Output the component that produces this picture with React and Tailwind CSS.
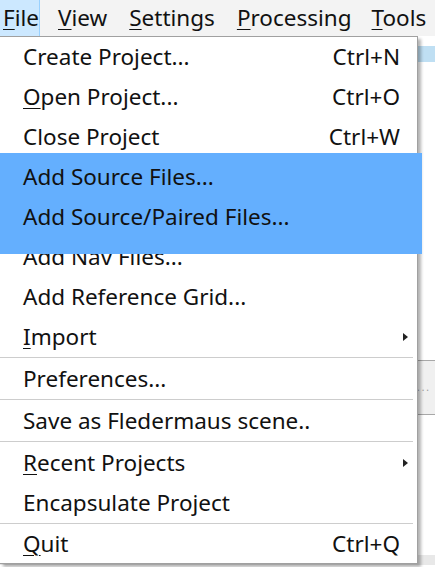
import React from "react";

const K = ({ children }) => (
  <span className="underline underline-offset-[3px] decoration-1">{children}</span>
);

function MenuBar() {
  return (
    <div className="flex h-[36px] bg-[#f3f3f3] items-center text-[22.5px]">
      <div className="h-[36px] w-[40px] pl-[3px] flex items-center bg-[#cce8ff] border-r border-[#99d1ff]">
        <span><K>F</K>ile</span>
      </div>
      <div className="pl-[18px] pr-[11px]"><K>V</K>iew</div>
      <div className="px-[11px]"><K>S</K>ettings</div>
      <div className="px-[11px]"><K>P</K>rocessing</div>
      <div className="px-[9px]"><K>T</K>ools</div>
    </div>
  );
}

function Background() {
  return (
    <div className="flex flex-col">
      <div className="h-[10px] bg-white" />
      <div className="h-[16px] bg-[#bfdff3]" />
      <div className="h-[298px] bg-white" />
      <div className="h-[55px] bg-[#f0f0f0] border-y border-[#a8a8a8] flex items-center justify-end pr-[4px]">
        <span className="text-[10px] tracking-[2px] text-[#9a9a9a]">....</span>
      </div>
      <div className="h-[140px] bg-white" />
      <div className="h-[10px] bg-[#e8e8e8]" />
    </div>
  );
}

function Arrow() {
  return (
    <svg width="5" height="8" viewBox="0 0 5 8">
      <path d="M0 0 L5 4 L0 8 Z" fill="#222" />
    </svg>
  );
}

function Item({ label, shortcut, arrow, raised, last }) {
  return (
    <div
      className={
        "flex items-center pl-[23px] pr-[7px] " +
        (last ? "h-[38px] " : "h-10 ") +
        (raised ? "relative z-20" : "")
      }
    >
      <span className="flex-1 whitespace-nowrap">{label}</span>
      <span className="whitespace-nowrap text-right">{shortcut}</span>
      <span className="w-[10px] flex justify-center">{arrow && <Arrow />}</span>
    </div>
  );
}

function Sep() {
  return <div className="h-px bg-[#cdcdcd] mr-[4px] mb-px" />;
}

function Dropdown() {
  return (
    <div className="absolute left-0 top-[36px] w-[418px] bg-white border-t border-r border-b border-[#a0a0a0] shadow-[3px_3px_3px_rgba(0,0,0,0.3)]">
      <div className="absolute left-0 top-[116px] w-[422px] h-[101px] bg-[#64affe] z-10" />
      <Item label="Create Project..." shortcut="Ctrl+N" />
      <Item label={<><K>O</K>pen Project...</>} shortcut="Ctrl+O" />
      <Item label="Close Project" shortcut="Ctrl+W" />
      <Item label="Add Source Files..." raised />
      <Item label="Add Source/Paired Files..." raised />
      <Item label="Add Nav Files..." />
      <Item label="Add Reference Grid..." />
      <Item label={<><K>I</K>mport</>} arrow />
      <Sep />
      <Item label="Preferences..." />
      <Sep />
      <Item label="Save as Fledermaus scene.." />
      <Sep />
      <Item label={<><K>R</K>ecent Projects</>} arrow />
      <Item label="Encapsulate Project" />
      <Sep />
      <Item label={<><K>Q</K>uit</>} shortcut="Ctrl+Q" last />
    </div>
  );
}

export default function App() {
  return (
    <div className="relative w-[435px] h-[567px] overflow-hidden bg-white text-[#111] font-['Noto_Sans',sans-serif] text-[22.5px]">
      <MenuBar />
      <Background />
      <Dropdown />
    </div>
  );
}
